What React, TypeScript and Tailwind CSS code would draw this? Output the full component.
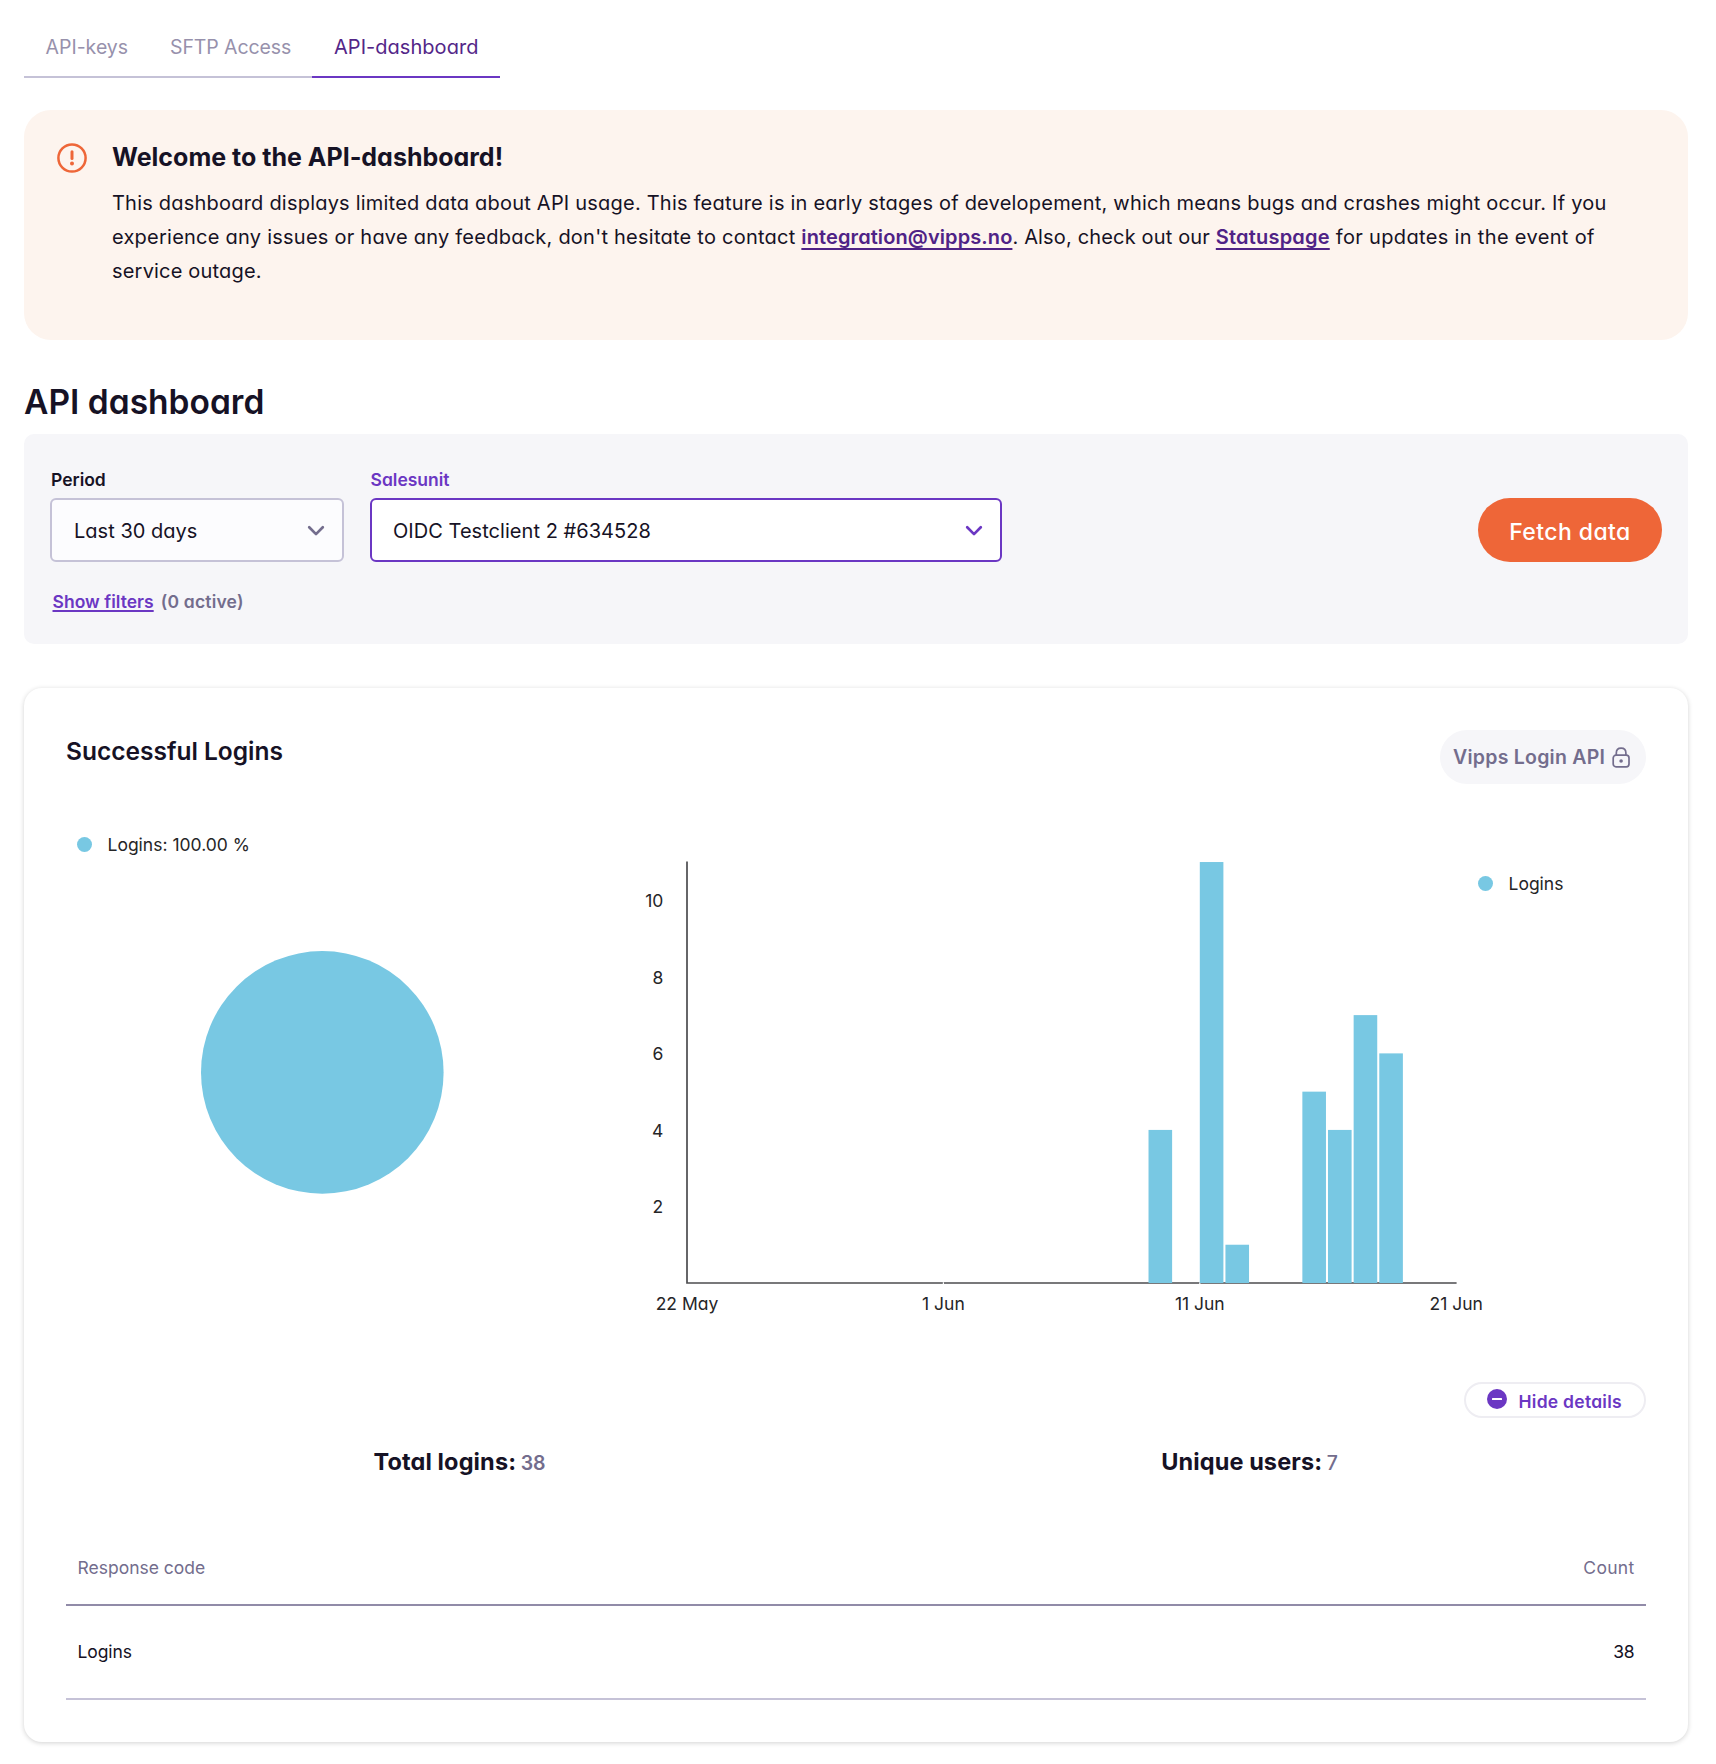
const BLUE = "#78c8e3";

const bars = [
  { day: 18, value: 4 },
  { day: 20, value: 11 },
  { day: 21, value: 1 },
  { day: 24, value: 5 },
  { day: 25, value: 4 },
  { day: 26, value: 7 },
  { day: 27, value: 6 },
];

const dates = [
  { day: 0, label: "22 May" },
  { day: 10, label: "1 Jun" },
  { day: 20, label: "11 Jun" },
  { day: 30, label: "21 Jun" },
];

const X0 = 65;
const Y0 = 443;
const DAY = 25.64;
const UNIT = 38.27;

function Chevron({ color }: { color: string }) {
  return (
    <svg width="18" height="12" viewBox="0 0 18 12" fill="none" className="mt-[1px]">
      <path d="M2.2 2.3 9 9.1l6.8-6.8" stroke={color} strokeWidth="2.7" strokeLinecap="round" strokeLinejoin="round" />
    </svg>
  );
}

function AlertIcon() {
  return (
    <svg width="30" height="30" viewBox="0 0 30 30" fill="none" className="mt-[2px] shrink-0">
      <circle cx="15" cy="15" r="13.6" stroke="#ee6638" strokeWidth="2.5" />
      <path d="M15 8.8v6.8" stroke="#ee6638" strokeWidth="3" strokeLinecap="round" />
      <circle cx="15" cy="20.4" r="2" fill="#ee6638" />
    </svg>
  );
}

function LockIcon() {
  return (
    <svg width="18" height="21" viewBox="0 0 18 21" fill="none" stroke="#736d8d">
      <rect x="1.2" y="8.2" width="15.8" height="11.6" rx="2.8" strokeWidth="1.7" />
      <path d="M4.3 8V6.1C4.3 3 6.3 1.2 9.1 1.2s4.8 1.8 4.8 4.9V8" strokeWidth="1.7" />
      <circle cx="9.1" cy="14" r="1.8" fill="#736d8d" stroke="none" />
    </svg>
  );
}

function MinusIcon() {
  return (
    <svg width="20" height="20" viewBox="0 0 20 20">
      <circle cx="10" cy="10" r="10" fill="#6b37c3" />
      <rect x="5" y="9" width="10" height="2" rx="0.5" fill="#fff" />
    </svg>
  );
}

function BarChart() {
  return (
    <svg width="856" height="490" viewBox="0 0 856 490" className="mt-[56px] shrink-0 overflow-visible text-[17.5px]">
      <path d={`M${X0} 21.5V${Y0}H834.6`} fill="none" stroke="#4c4c4f" strokeWidth="1.7" />
      <path d="M320.8 443.2h1.2M577.2 443.2h1.2" stroke="#fff" strokeWidth="1.7" />
      {bars.map((b) => (
        <rect key={b.day} x={X0 + b.day * DAY} y={Y0 - b.value * UNIT} width="23.6" height={b.value * UNIT} fill={BLUE} />
      ))}
      {[10, 8, 6, 4, 2].map((v) => (
        <text key={v} x="41.3" y={Y0 - v * UNIT + 7} textAnchor="end" fill="#252527">
          {v}
        </text>
      ))}
      {dates.map((d) => (
        <text key={d.day} x={X0 + d.day * DAY} y="470" textAnchor="middle" fill="#252527">
          {d.label}
        </text>
      ))}
    </svg>
  );
}

export default function App() {
  return (
    <div className="h-[1764px] w-[1716px] bg-white px-[24px] pr-[28px] pt-[17px] font-['Inter',sans-serif] text-[#161225] [font-feature-settings:'cv11']">
      <nav className="flex h-[61px] w-[476px] whitespace-nowrap text-[19.5px]">
        <div className="flex w-[125px] items-center border-b-2 border-[#c5c2d7] pl-[21.5px] pt-[2px] text-[#9791ac]">API-keys</div>
        <div className="flex w-[163px] items-center border-b-2 border-[#c5c2d7] pl-[21px] pt-[2px] tracking-[-0.1px] text-[#9791ac]">SFTP Access</div>
        <div className="flex w-[188px] items-center border-b-2 border-[#6b37c3] pl-[22px] text-[20px] tracking-[0.04px] text-[#532688]">API-dashboard</div>
      </nav>

      <section className="mt-[32px] flex h-[230px] rounded-[27px] bg-[#fdf4ee] pl-[33px] pt-[31px]">
        <AlertIcon />
        <div className="ml-[25px] whitespace-nowrap">
          <h2 className="text-[25px] font-[650] leading-[32px]">Welcome to the API-dashboard!</h2>
          <p className="mt-[13px] text-[20px] leading-[34px]">
            <span className="block tracking-[0.213px]">
              This dashboard displays limited data about API usage. This feature is in early stages of developement, which means bugs and crashes might occur. If you
            </span>
            <span className="block tracking-[0.24px]">
              experience any issues or have any feedback, don't hesitate to contact{" "}
              <a className="font-semibold tracking-[0.1px] text-[#4f2286] underline decoration-2 underline-offset-[4px] [text-decoration-skip-ink:none]">integration@vipps.no</a>
              <span className="tracking-[0.16px]">. Also, check out our </span>
              <a className="font-semibold tracking-[0.2px] text-[#4f2286] underline decoration-2 underline-offset-[4px] [text-decoration-skip-ink:none]">Statuspage</a>
              <span className="tracking-[0.34px]"> for updates in the event of</span>
            </span>
            <span className="block tracking-[0.19px]">service outage.</span>
          </p>
        </div>
      </section>

      <h1 className="mt-[42px] text-[33.5px] font-semibold leading-[40px] tracking-[0.02px]">API dashboard</h1>

      <section className="mt-[12px] h-[210px] rounded-[10px] bg-[#f6f6f9] px-[26px] pt-[34px]">
        <div className="flex items-end">
          <div className="w-[294px]">
            <div className="pl-[1px] text-[17.5px] font-semibold leading-[24px]">Period</div>
            <div className="mt-[6px] flex h-[64px] items-center justify-between rounded-[6px] border-2 border-[#c5c2d7] bg-[#fcfcfe] pl-[22px] pr-[17px] text-[20px]">
              <span className="pt-[1px] tracking-[0.02px]">Last 30 days</span>
              <Chevron color="#736d8d" />
            </div>
          </div>
          <div className="ml-[26px] w-[632px]">
            <div className="pl-[0.5px] text-[17.5px] font-semibold leading-[24px] text-[#6b37c3]">Salesunit</div>
            <div className="mt-[6px] flex h-[64px] items-center justify-between rounded-[6px] border-2 border-[#6b37c3] bg-white pl-[21px] pr-[17px] text-[20px]">
              <span className="pt-[1px] tracking-[0.04px]">OIDC Testclient 2 #634528</span>
              <Chevron color="#6b37c3" />
            </div>
          </div>
          <button className="ml-auto h-[64px] w-[184px] rounded-full bg-[#ee6638] pt-[4px] text-[23px] font-medium tracking-[0.42px] text-white">Fetch data</button>
        </div>
        <div className="mt-[28px] flex pl-[2.5px] text-[17.5px] font-semibold leading-[24px]">
          <a className="tracking-[0.03px] text-[#6b37c3] underline decoration-2 underline-offset-[2px] [text-decoration-skip-ink:none]">Show filters</a>
          <span className="ml-[7px] tracking-[0.2px] text-[#736d8d]">(0 active)</span>
        </div>
      </section>

      <section className="mt-[44px] h-[1054px] rounded-[18px] bg-white px-[42px] pt-[42px] shadow-[0_1px_5px_rgba(0,0,0,0.18)]">
        <div className="flex h-[54px] justify-between">
          <h2 className="mt-[4.5px] text-[24.5px] font-semibold leading-[32px]">Successful Logins</h2>
          <div className="flex w-[206px] items-center rounded-full bg-[#f6f6f9] pl-[13px] text-[19.5px] font-semibold text-[#736d8d]">
            <span className="w-[159px] whitespace-nowrap pt-[2px] tracking-[0.25px]">Vipps Login API</span>
            <LockIcon />
          </div>
        </div>

        <div className="flex h-[598px] text-[17.5px] text-[#252527]">
          <div className="w-[556px]">
            <div className="mt-[49px] flex h-[24px] items-center pl-[11px]">
              <span className="mb-[1px] size-[15px] rounded-full bg-[#78c8e3]" />
              <span className="ml-[15.5px]">Logins: 100.00 %</span>
            </div>
            <svg width="244" height="244" viewBox="0 0 244 244" className="ml-[135px] mt-[94px]">
              <circle cx="121.3" cy="121.4" r="121.3" fill={BLUE} />
            </svg>
          </div>
          <BarChart />
          <div className="mt-[87px] flex h-[24px] items-center">
            <span className="size-[15px] rounded-full bg-[#78c8e3]" />
            <span className="ml-[15.5px] pt-[2px]">Logins</span>
          </div>
        </div>

        <div className="flex justify-end">
          <button className="flex h-[36px] w-[182px] items-center rounded-full border-2 border-[#eeedf2] pl-[21px] text-[17.5px] font-semibold text-[#6b37c3]">
            <span className="-mt-[2px]">
              <MinusIcon />
            </span>
            <span className="ml-[11.5px] mt-[4px] whitespace-nowrap tracking-[0.26px]">Hide details</span>
          </button>
        </div>

        <div className="mt-[28px] grid grid-cols-2 text-center leading-[32px]">
          <div className="pr-[3px]">
            <span className="text-[23.5px] font-[650] tracking-[0.13px]">Total logins:</span> <span className="text-[19.5px] font-semibold text-[#736d8d]">38</span>
          </div>
          <div className="pr-[3px]">
            <span className="text-[23.5px] font-[650] tracking-[0.1px]">Unique users:</span> <span className="text-[19.5px] font-medium text-[#736d8d]">7</span>
          </div>
        </div>

        <div className="mt-[76px] text-[17.5px] leading-[24px]">
          <div className="flex justify-between border-b-2 border-[#918ba8] px-[11.5px] pb-[24px] text-[#736d8d]">
            <span>Response code</span>
            <span className="tracking-[0.3px]">Count</span>
          </div>
          <div className="flex justify-between border-b-2 border-[#c5c2d7] px-[11.5px] py-[34px]">
            <span className="tracking-[-0.1px]">Logins</span>
            <span className="tracking-[-0.2px]">38</span>
          </div>
        </div>
      </section>
    </div>
  );
}
